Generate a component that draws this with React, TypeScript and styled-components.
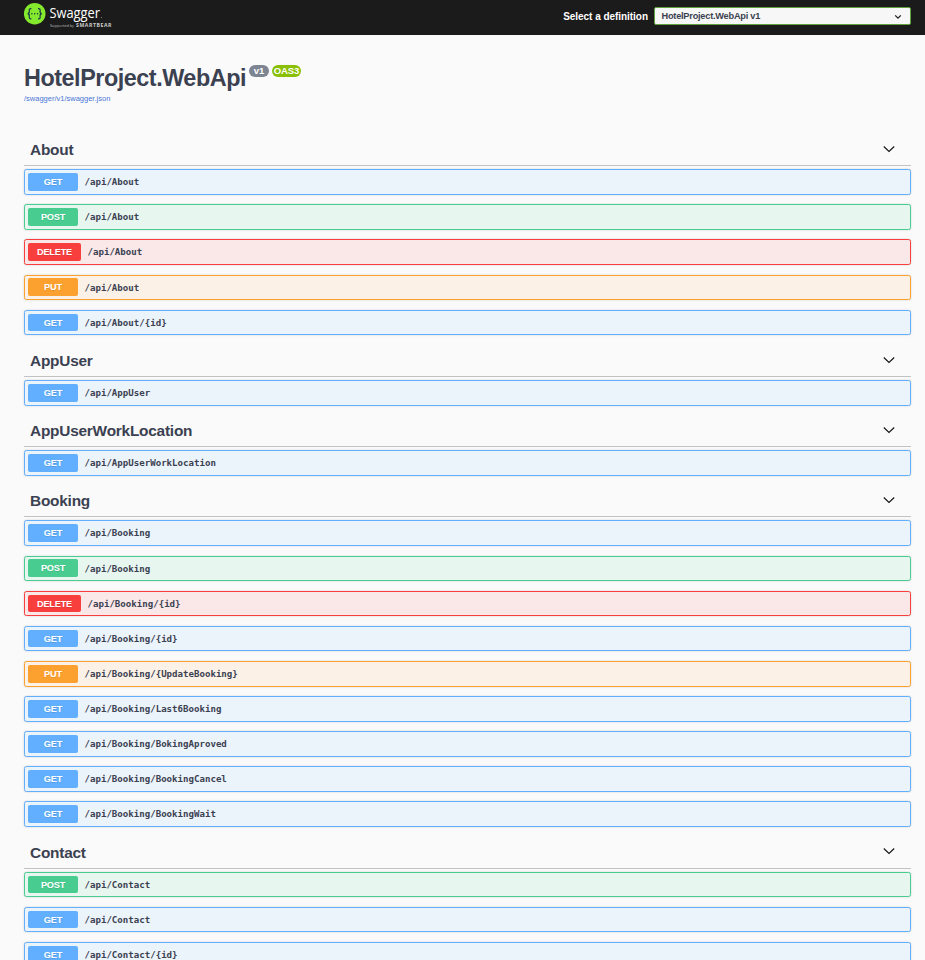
import React from "react";
import styled, { createGlobalStyle } from "styled-components";

type Method = "get" | "post" | "delete" | "put";

const methodColors: Record<Method, { solid: string; tint: string }> = {
  get: { solid: "#61affe", tint: "#ebf3fb" },
  post: { solid: "#49cc90", tint: "#e8f6f0" },
  delete: { solid: "#f93e3e", tint: "#fae7e7" },
  put: { solid: "#fca130", tint: "#fbf1e6" },
};

const sections: { tag: string; operations: [Method, string][] }[] = [
  {
    tag: "About",
    operations: [
      ["get", "/api/About"],
      ["post", "/api/About"],
      ["delete", "/api/About"],
      ["put", "/api/About"],
      ["get", "/api/About/{id}"],
    ],
  },
  { tag: "AppUser", operations: [["get", "/api/AppUser"]] },
  { tag: "AppUserWorkLocation", operations: [["get", "/api/AppUserWorkLocation"]] },
  {
    tag: "Booking",
    operations: [
      ["get", "/api/Booking"],
      ["post", "/api/Booking"],
      ["delete", "/api/Booking/{id}"],
      ["get", "/api/Booking/{id}"],
      ["put", "/api/Booking/{UpdateBooking}"],
      ["get", "/api/Booking/Last6Booking"],
      ["get", "/api/Booking/BokingAproved"],
      ["get", "/api/Booking/BookingCancel"],
      ["get", "/api/Booking/BookingWait"],
    ],
  },
  {
    tag: "Contact",
    operations: [
      ["post", "/api/Contact"],
      ["get", "/api/Contact"],
      ["get", "/api/Contact/{id}"],
    ],
  },
];

const GlobalStyle = createGlobalStyle`
  *, *::before, *::after { box-sizing: border-box; }
  body {
    margin: 0;
    background: #fafafa;
    color: #3b4151;
    font-family: "Liberation Sans", Arial, sans-serif;
  }
`;

const Page = styled.div`
  height: 960px;
  overflow: hidden;
`;

const Topbar = styled.header`
  display: flex;
  align-items: flex-start;
  justify-content: space-between;
  height: 35px;
  padding: 0 14px 0 24px;
  background: #1b1b1b;
`;

const Logo = styled.svg`
  display: block;
  width: 90px;
  height: 30px;
`;

const DefinitionPicker = styled.div`
  display: flex;
  align-items: center;
  gap: 6px;
  padding-top: 7px;
  color: #fff;
  font-size: 10px;
  font-weight: 700;
  letter-spacing: -0.04px;
`;

const Select = styled.button`
  display: flex;
  align-items: center;
  justify-content: space-between;
  width: 257px;
  height: 18px;
  padding: 0 8px 0 6.5px;
  border: 1px solid #62a03f;
  border-radius: 2px;
  background: #f7f7f7;
  color: #3b4151;
  font: 700 9.2px "Liberation Sans", Arial, sans-serif;
  letter-spacing: -0.22px;
`;

const SelectArrow = styled.svg`
  width: 8px;
  height: 6px;
  margin-top: 1px;
`;

const Info = styled.section`
  height: 99.015625px;
  padding: 30px 24px 0;
`;

const Title = styled.h1`
  display: flex;
  align-items: flex-start;
  margin: 0;
  font-size: 23.4px;
  letter-spacing: -0.47px;
  line-height: 26px;
`;

const Version = styled.span<{ $color: string; $width: number }>`
  width: ${(p) => p.$width}px;
  height: 12px;
  margin-left: 3px;
  border-radius: 6px;
  background: ${(p) => p.$color};
  color: #fff;
  font-size: 9.5px;
  letter-spacing: -0.1px;
  line-height: 12px;
  text-align: center;
`;

const SpecLink = styled.a`
  display: block;
  margin-top: 3px;
  color: #4a76d8;
  font-size: 7.5px;
  line-height: 9px;
`;

const Sections = styled.main`
  padding: 0 14px 0 24px;
`;

const TagHeader = styled.h2`
  display: flex;
  align-items: center;
  justify-content: space-between;
  height: 32px;
  margin: 0 0 3.125px;
  padding: 1.1px 16px 0 6px;
  border-bottom: 1px solid rgba(59, 65, 81, 0.3);
  font-size: 15.4px;
  letter-spacing: -0.22px;
  line-height: 20px;
`;

const Chevron = styled.svg`
  width: 12px;
  height: 8px;
  margin-top: -2.5px;
`;

const Operation = styled.div<{ $method: Method }>`
  display: flex;
  align-items: center;
  height: 25.703125px;
  margin-bottom: 9.421875px;
  padding: 0 3px;
  border: 1px solid ${(p) => methodColors[p.$method].solid};
  border-radius: 2.5px;
  background: ${(p) => methodColors[p.$method].tint};
  box-shadow: 0 0 2px rgba(0, 0, 0, 0.19);
`;

const MethodBadge = styled.span<{ $method: Method }>`
  width: ${(p) => (p.$method === "delete" ? 53 : 50)}px;
  height: 17.75px;
  border-radius: 2px;
  background: ${(p) => methodColors[p.$method].solid};
  color: #fff;
  font-size: 9.2px;
  letter-spacing: -0.2px;
  font-weight: 700;
  line-height: 18.2px;
  text-align: center;
  text-shadow: 0 1px 0 rgba(0, 0, 0, 0.1);
`;

const Path = styled.span`
  padding: 0.27px 6.5px 0;
  font-family: "DejaVu Sans Mono", monospace;
  font-size: 9.1px;
  font-weight: 700;
  line-height: 12px;
`;

function SwaggerLogo() {
  return (
    <Logo viewBox="0 0 90 30" role="img" aria-label="Swagger, supported by SmartBear">
      <circle cx="10.7" cy="13.7" r="10.8" fill="#85ea2d" />
      <g fill="none" stroke="#173647" strokeWidth="1.2">
        <path d="M7.4 8.6c-2-.2-2.3.6-2.1 2.4.2 1.6-.2 2.4-1.6 2.7 1.4.3 1.8 1.1 1.6 2.7-.2 1.8.1 2.6 2.1 2.4" />
        <path d="M14 8.6c2-.2 2.3.6 2.1 2.4-.2 1.6.2 2.4 1.6 2.7-1.4.3-1.8 1.1-1.6 2.7.2 1.8-.1 2.6-2.1 2.4" />
      </g>
      <g fill="#173647">
        <circle cx="7.9" cy="13.7" r=".75" />
        <circle cx="10.7" cy="13.7" r=".75" />
        <circle cx="13.5" cy="13.7" r=".75" />
      </g>
      <text x="25.5" y="18" fill="#fff" fontFamily="Open Sans, sans-serif" fontSize="14" textLength="50.5" lengthAdjust="spacingAndGlyphs">Swagger</text>
      <circle cx="77.3" cy="17.4" r=".5" fill="#aaa" />
      <text x="26" y="27" fill="#bbb" fontFamily="Open Sans, sans-serif" fontSize="4.2" textLength="24" lengthAdjust="spacingAndGlyphs">Supported by</text>
      <text x="52" y="27" fill="#ccc" fontFamily="Open Sans, sans-serif" fontWeight="700" fontSize="5.2" textLength="35.5" lengthAdjust="spacing">SMARTBEAR</text>
    </Logo>
  );
}

export default function App() {
  return (
    <Page>
      <GlobalStyle />
      <Topbar>
        <SwaggerLogo />
        <DefinitionPicker>
          <span>Select a definition</span>
          <Select>
            <span>HotelProject.WebApi v1</span>
            <SelectArrow viewBox="0 0 8 6" fill="none" stroke="#222" strokeWidth="1.3">
              <path d="M1.2 1.4 4 4.2 6.8 1.4" />
            </SelectArrow>
          </Select>
        </DefinitionPicker>
      </Topbar>
      <Info>
        <Title>
          HotelProject.WebApi
          <Version $color="#7d8492" $width={20}>v1</Version>
          <Version $color="#89bf04" $width={29}>OAS3</Version>
        </Title>
        <SpecLink>/swagger/v1/swagger.json</SpecLink>
      </Info>
      <Sections>
        {sections.map(({ tag, operations }) => (
          <section key={tag}>
            <TagHeader>
              {tag}
              <Chevron viewBox="0 0 12 8" fill="none" stroke="#111" strokeWidth="1.1">
                <path d="M.8 1.5 6 6.4 11.2 1.5" />
              </Chevron>
            </TagHeader>
            {operations.map(([method, path]) => (
              <Operation key={method + path} $method={method}>
                <MethodBadge $method={method}>{method.toUpperCase()}</MethodBadge>
                <Path>{path}</Path>
              </Operation>
            ))}
          </section>
        ))}
      </Sections>
    </Page>
  );
}
